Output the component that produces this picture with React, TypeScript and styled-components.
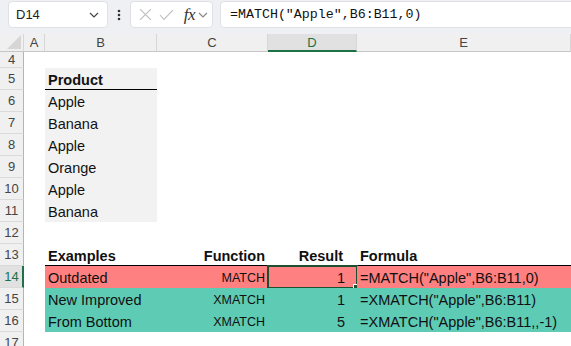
import React from 'react';
import styled, { createGlobalStyle } from 'styled-components';

const GlobalStyle = createGlobalStyle`
  html, body {
    margin: 0;
    padding: 0;
    background: #ffffff;
    overflow: hidden;
  }
  body {
    font-family: "Liberation Sans", Arial, sans-serif;
    color: #000;
  }
`;

const RED = '#ff8080';
const TEAL = '#5ecbb5';
const GRAY = '#f2f2f2';

type Row = {
  n: number;
  cells: Array<CellSpec | null>;
};

type CellSpec = {
  text?: string;
  bg?: string;
  align?: 'left' | 'right';
  bold?: boolean;
  small?: boolean;
  pad?: number;
  rule?: boolean;
  active?: boolean;
};

const products = ['Apple', 'Banana', 'Apple', 'Orange', 'Apple', 'Banana'];

const examples = [
  { label: 'Outdated', fn: 'MATCH', result: '1', formula: '=MATCH("Apple",B6:B11,0)', bg: RED, active: true },
  { label: 'New Improved', fn: 'XMATCH', result: '1', formula: '=XMATCH("Apple",B6:B11)', bg: TEAL },
  { label: 'From Bottom', fn: 'XMATCH', result: '5', formula: '=XMATCH("Apple",B6:B11,,-1)', bg: TEAL },
];

const rows: Row[] = [
  { n: 4, cells: [null, null, null, null, null] },
  { n: 5, cells: [null, { text: 'Product', bold: true, bg: GRAY, rule: true }, null, null, null] },
  ...products.map((p, i) => ({
    n: 6 + i,
    cells: [null, { text: p, bg: GRAY }, null, null, null],
  })),
  { n: 12, cells: [null, null, null, null, null] },
  {
    n: 13,
    cells: [
      null,
      { text: 'Examples', bold: true, rule: true },
      { text: 'Function', bold: true, rule: true, align: 'right' },
      { text: 'Result', bold: true, rule: true, align: 'right', pad: 14 },
      { text: 'Formula', bold: true, rule: true },
    ],
  },
  ...examples.map((e, i) => ({
    n: 14 + i,
    cells: [
      null,
      { text: e.label, bg: e.bg },
      { text: e.fn, bg: e.bg, align: 'right' as const, small: true },
      { text: e.result, bg: e.bg, align: 'right' as const, pad: 12, active: e.active },
      { text: e.formula, bg: e.bg },
    ],
  })),
  { n: 17, cells: [null, null, null, null, null] },
];

const columns = ['A', 'B', 'C', 'D', 'E'];

const ChevronDown = ({ color = '#444' }: { color?: string }) => (
  <svg width="10" height="6" viewBox="0 0 10 6">
    <path d="M1 1 L5 5 L9 1" fill="none" stroke={color} strokeWidth="1.2" />
  </svg>
);

const App: React.FC = () => {
  return (
    <Page>
      <GlobalStyle />
      <Toolbar>
        <NameBox>
          <span>D14</span>
          <ChevronDown />
        </NameBox>
        <Dots>
          <svg width="4" height="12" viewBox="0 0 4 12">
            <circle cx="2" cy="2" r="1.3" fill="#333" />
            <circle cx="2" cy="6" r="1.3" fill="#333" />
            <circle cx="2" cy="10" r="1.3" fill="#333" />
          </svg>
        </Dots>
        <FxBox>
          <svg width="13" height="13" viewBox="0 0 13 13">
            <path d="M1 1 L12 12 M12 1 L1 12" stroke="#bdbdbd" strokeWidth="1.1" fill="none" />
          </svg>
          <svg width="15" height="12" viewBox="0 0 15 12">
            <path d="M1 6 L5 10.5 L14 1" stroke="#bdbdbd" strokeWidth="1.1" fill="none" />
          </svg>
          <Fx>fx</Fx>
          <ChevronDown color="#888" />
        </FxBox>
        <FormulaBox>=MATCH("Apple",B6:B11,0)</FormulaBox>
      </Toolbar>

      <Sheet>
        <Corner>
          <svg width="14" height="14" viewBox="0 0 14 14">
            <path d="M14 0 L14 14 L0 14 Z" fill="#d6d6d6" />
          </svg>
        </Corner>
        {columns.map((c) => (
          <ColHead key={c} $active={c === 'D'}>
            {c}
          </ColHead>
        ))}

        {rows.map((r) => (
          <React.Fragment key={r.n}>
            <RowHead $active={r.n === 14}>{r.n}</RowHead>
            {r.cells.map((c, i) =>
              c ? (
                <Cell
                  key={i}
                  $bg={c.bg}
                  $align={c.align}
                  $bold={c.bold}
                  $small={c.small}
                  $pad={c.pad}
                  $rule={c.rule}
                >
                  {c.text}
                  {c.active && (
                    <Selection>
                      <FillHandle />
                    </Selection>
                  )}
                </Cell>
              ) : (
                <Cell key={i} />
              )
            )}
          </React.Fragment>
        ))}
      </Sheet>
    </Page>
  );
};

export default App;

const Page = styled.div`
  width: 571px;
  height: 346px;
  overflow: hidden;
  background: #fff;
`;

const Toolbar = styled.div`
  height: 34px;
  box-sizing: border-box;
  padding: 1px 0 0 8px;
  display: flex;
  align-items: flex-start;
  background: #eef0f4;
`;

const Box = styled.div`
  height: 27px;
  box-sizing: border-box;
  background: #ffffff;
  border: 1px solid #dfe1e5;
  border-radius: 4px;
  display: flex;
  align-items: center;
`;

const NameBox = styled(Box)`
  width: 100px;
  padding: 0 8px 0 7px;
  justify-content: space-between;
  font-size: 13px;
  color: #222;
`;

const Dots = styled.div`
  width: 22px;
  height: 27px;
  display: flex;
  align-items: center;
  justify-content: center;
`;

const FxBox = styled(Box)`
  width: 83px;
  padding: 0 4px 0 8px;
  gap: 7px;
`;

const Fx = styled.span`
  font-family: "Liberation Serif", "Times New Roman", serif;
  font-style: italic;
  font-size: 17px;
  color: #333;
  margin-left: 3px;
  margin-right: -4px;
  letter-spacing: -0.5px;
`;

const FormulaBox = styled(Box)`
  flex: 1;
  margin-left: 7px;
  margin-right: -8px;
  padding-left: 9px;
  font-family: "Liberation Mono", "Courier New", monospace;
  font-size: 13.3px;
  color: #111;
`;

const Sheet = styled.div`
  display: grid;
  grid-template-columns: 24px 21px 112px 111px 89px 214px;
  grid-template-rows: 18px 16px repeat(13, 22px);
`;

const Corner = styled.div`
  background: #f0f0f0;
  border-bottom: 1px solid #c6c6c6;
  border-right: 1px solid #d6d6d6;
  box-sizing: border-box;
  display: flex;
  align-items: flex-end;
  justify-content: flex-end;
  padding: 0 2px 2px 0;
`;

const ColHead = styled.div<{ $active?: boolean }>`
  box-sizing: border-box;
  background: ${(p) => (p.$active ? '#e1e1e1' : '#f0f0f0')};
  border-right: 1px solid #d6d6d6;
  border-bottom: ${(p) => (p.$active ? '2px solid #1e7145' : '1px solid #c6c6c6')};
  display: flex;
  align-items: center;
  justify-content: center;
  font-size: 13px;
  color: ${(p) => (p.$active ? '#1e7145' : '#444')};
  padding-top: ${(p) => (p.$active ? 1 : 0)}px;
`;

const RowHead = styled.div<{ $active?: boolean }>`
  box-sizing: border-box;
  background: ${(p) => (p.$active ? '#e1e1e1' : '#f0f0f0')};
  border-right: ${(p) => (p.$active ? '2px solid #1e7145' : '1px solid #b4b4b4')};
  border-bottom: 1px solid #dadada;
  display: flex;
  align-items: center;
  justify-content: center;
  font-size: 13px;
  color: ${(p) => (p.$active ? '#1e7145' : '#444')};
  padding-left: ${(p) => (p.$active ? 1 : 0)}px;
`;

const Cell = styled.div<{
  $bg?: string;
  $align?: 'left' | 'right';
  $bold?: boolean;
  $small?: boolean;
  $pad?: number;
  $rule?: boolean;
}>`
  position: relative;
  box-sizing: border-box;
  display: flex;
  align-items: flex-end;
  justify-content: ${(p) => (p.$align === 'right' ? 'flex-end' : 'flex-start')};
  padding-bottom: ${(p) => (p.$rule ? 0 : 1)}px;
  padding-left: ${(p) => (p.$align === 'right' ? 0 : p.$pad ?? 3)}px;
  padding-right: ${(p) => (p.$align === 'right' ? p.$pad ?? 3 : 0)}px;
  background: ${(p) => p.$bg ?? 'transparent'};
  border-bottom: ${(p) => (p.$rule ? '1.5px solid #000' : 'none')};
  font-size: ${(p) => (p.$small ? 12.5 : 14.5)}px;
  font-weight: ${(p) => (p.$bold ? 700 : 400)};
  line-height: 17px;
  white-space: nowrap;
  color: #111;
`;

const Selection = styled.div`
  position: absolute;
  left: -1px;
  top: -1px;
  right: -1px;
  bottom: -1px;
  border: 2px solid #1d4f31;
  pointer-events: none;
`;

const FillHandle = styled.div`
  position: absolute;
  right: -5px;
  bottom: -5px;
  width: 6px;
  height: 6px;
  background: #1d4f31;
  border: 1px solid #fff;
`;
